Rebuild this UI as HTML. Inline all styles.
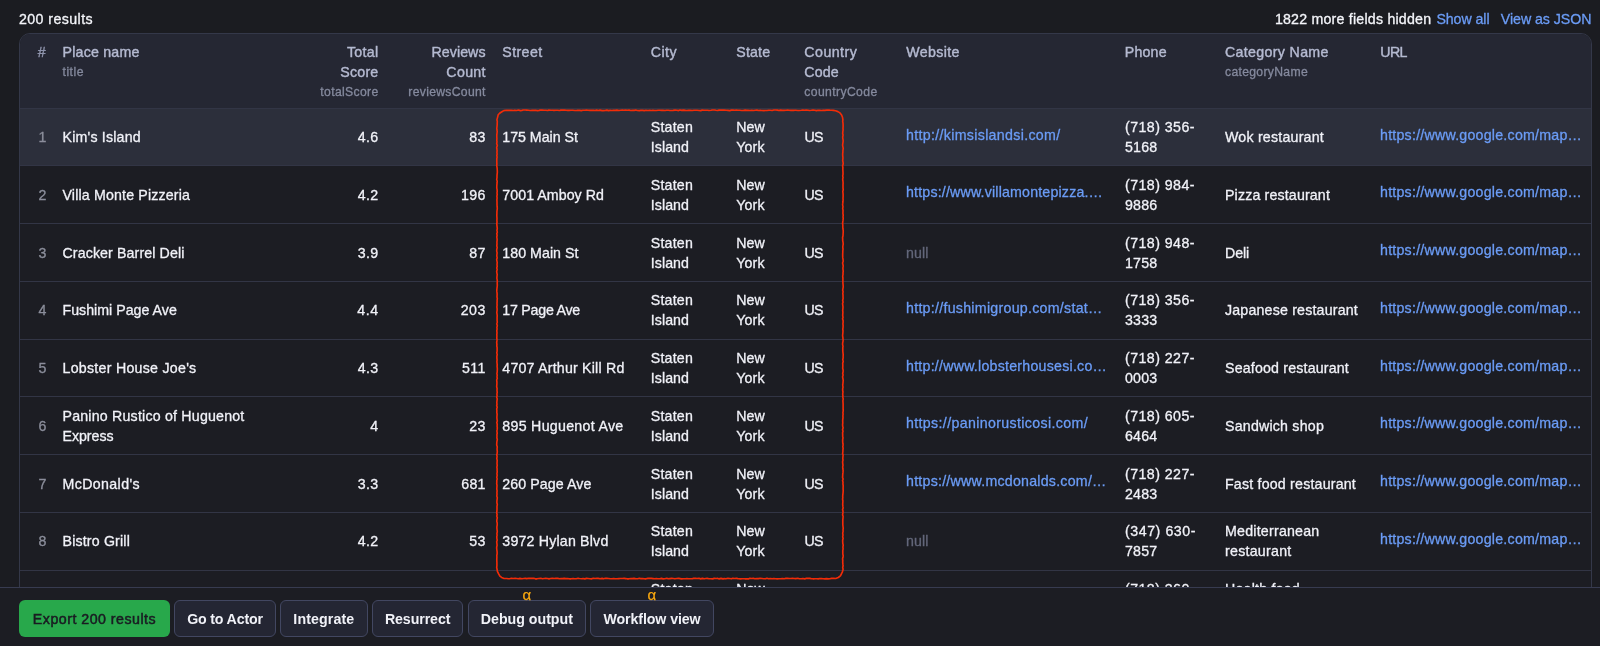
<!DOCTYPE html>
<html lang="en">
<head>
<meta charset="utf-8">
<title>Dataset results</title>
<style>
html,body{margin:0;padding:0}
body{width:1600px;height:646px;overflow:hidden;background:#1b1c21;position:relative;
 font-family:"Liberation Sans",sans-serif;font-size:14.2px;line-height:20px;color:#f1f2f8}
.t{position:absolute;white-space:nowrap;line-height:20px;-webkit-text-stroke:0.3px currentColor}
#txt{position:absolute;left:0;top:0;width:1600px;height:646px;will-change:transform}
.h,.hi{-webkit-text-stroke:0.42px currentColor}
.w{color:#f4f5fa}
.h{color:#b5bad1}
.hi{color:#8e93ab}
.s{color:#858a9e}
.i{color:#8b8e9b}
.c{color:#f1f2f8}
.a{color:#6b9cf6}
.n{color:#63677a}
#grid{position:absolute;left:19px;top:33px;width:1573px;height:620px;box-sizing:border-box;
 border:1px solid #343849;border-radius:11px 11px 0 0;background:#1c1d23;overflow:hidden}
#grid .hd{position:absolute;left:0;top:0;width:100%;height:74px;background:#252733}
#grid .sel{position:absolute;left:0;width:100%;background:#2c2f3b}
#grid .ln{position:absolute;left:0;width:100%;height:1px;background:#323545}
#bar{position:absolute;left:0;top:587px;width:1600px;height:59px;background:#1c1d23;border-top:1px solid #373b50;box-sizing:border-box}
#tools{position:absolute;left:0;top:0;width:1600px;height:646px;will-change:transform}
.btn{position:absolute;box-sizing:border-box;border-radius:6px;font:inherit;font-weight:bold;white-space:nowrap;margin:0;padding:0;border:0;text-align:left;overflow:visible;cursor:pointer}
.btn .t{-webkit-text-stroke:0}
.btn.g{background:#28a84b;color:#1a1c22;font-weight:normal}
.btn.g .t{-webkit-text-stroke:0.5px currentColor}
.btn.b{background:#242633;border:1px solid #424761;color:#f1f2f8}
.alpha{position:absolute;color:#f9a80f;font-size:15px;line-height:16px;width:20px;text-align:center;-webkit-text-stroke:0.25px #f9a80f}
#mark{position:absolute;left:0;top:0}
</style>
</head>
<body>
<div id="grid">
<div class="hd"></div>
<div class="sel" style="top:74.75px;height:56.73px"></div>
<div class="ln" style="top:73.75px"></div>
<div class="ln" style="top:131.48px"></div>
<div class="ln" style="top:189.21px"></div>
<div class="ln" style="top:246.94px"></div>
<div class="ln" style="top:304.67px"></div>
<div class="ln" style="top:362.40px"></div>
<div class="ln" style="top:420.13px"></div>
<div class="ln" style="top:477.86px"></div>
<div class="ln" style="top:535.59px"></div>
<div class="ln" style="top:593.32px"></div>
</div>
<div id="txt">
<div class="topbar" role="status">
<span class="t w" style="top:8.68px;left:19.00px;letter-spacing:0.418px">200 results</span>
<span class="t w" style="top:8.68px;left:1274.90px;letter-spacing:0.216px">1822 more fields hidden</span>
<a class="t a" style="top:8.68px;left:1436.40px;letter-spacing:-0.068px">Show all</a>
<a class="t a" style="top:8.68px;left:1500.80px;letter-spacing:-0.042px">View as JSON</a>
</div>
<div class="thead" role="row">
<span class="t hi" style="top:42.18px;left:37.80px;letter-spacing:0.900px">#</span>
<span class="t h" style="top:42.18px;left:62.50px;letter-spacing:0.208px">Place name</span>
<span class="t s" style="top:62.57px;left:62.50px;font-size:12.2px;line-height:18px;letter-spacing:0.506px">title</span>
<span class="t h" style="top:42.18px;right:1221.39px;letter-spacing:0.356px">Total</span>
<span class="t h" style="top:62.28px;right:1221.51px;letter-spacing:0.237px">Score</span>
<span class="t s" style="top:83.17px;right:1221.41px;font-size:12.2px;line-height:18px;letter-spacing:0.338px">totalScore</span>
<span class="t h" style="top:42.18px;right:1114.45px;letter-spacing:0.054px">Reviews</span>
<span class="t h" style="top:62.28px;right:1114.17px;letter-spacing:0.328px">Count</span>
<span class="t s" style="top:83.17px;right:1114.20px;font-size:12.2px;line-height:18px;letter-spacing:0.305px">reviewsCount</span>
<span class="t h" style="top:42.18px;left:502.30px;letter-spacing:0.390px">Street</span>
<span class="t h" style="top:42.18px;left:650.75px;letter-spacing:0.453px">City</span>
<span class="t h" style="top:42.18px;left:736.30px;letter-spacing:0.172px">State</span>
<span class="t h" style="top:42.18px;left:804.30px;letter-spacing:0.473px">Country</span>
<span class="t h" style="top:62.28px;left:804.30px;letter-spacing:0.145px">Code</span>
<span class="t s" style="top:83.17px;left:804.30px;font-size:12.2px;line-height:18px;letter-spacing:0.376px">countryCode</span>
<span class="t h" style="top:42.18px;left:906.30px;letter-spacing:0.357px">Website</span>
<span class="t h" style="top:42.18px;left:1124.80px;letter-spacing:0.194px">Phone</span>
<span class="t h" style="top:42.18px;left:1225.00px;letter-spacing:0.338px">Category Name</span>
<span class="t s" style="top:62.57px;left:1225.00px;font-size:12.2px;line-height:18px;letter-spacing:0.311px">categoryName</span>
<span class="t h" style="top:42.18px;left:1380.30px;letter-spacing:-0.600px">URL</span>
</div>
<div class="tr" role="row">
<span class="t i" style="top:127.24px;right:1553.70px">1</span>
<span class="t c" style="top:127.24px;left:62.50px;letter-spacing:0.188px">Kim&#x27;s Island</span>
<span class="t c" style="top:127.24px;right:1221.38px;letter-spacing:0.422px">4.6</span>
<span class="t c" style="top:127.24px;right:1113.89px;letter-spacing:0.609px">83</span>
<span class="t c" style="top:127.24px;left:502.30px;letter-spacing:-0.011px">175 Main St</span>
<span class="t c" style="top:117.24px;left:650.75px;letter-spacing:0.203px">Staten</span>
<span class="t c" style="top:137.24px;left:650.75px;letter-spacing:0.065px">Island</span>
<span class="t c" style="top:117.24px;left:736.20px;letter-spacing:0.036px">New</span>
<span class="t c" style="top:137.24px;left:736.20px;letter-spacing:0.156px">York</span>
<span class="t c" style="top:127.24px;left:804.40px;letter-spacing:-0.559px">US</span>
<a class="t a" style="top:124.64px;left:906.00px;letter-spacing:0.327px">http://kimsislandsi.com/</a>
<span class="t c" style="top:117.24px;left:1125.00px;letter-spacing:0.453px">(718) 356-</span>
<span class="t c" style="top:137.24px;left:1125.00px;letter-spacing:0.234px">5168</span>
<span class="t c" style="top:127.24px;left:1225.00px;letter-spacing:0.218px">Wok restaurant</span>
<a class="t a" style="top:124.64px;left:1380.00px;letter-spacing:0.238px">https://www.google.com/map…</a>
</div>
<div class="tr" role="row">
<span class="t i" style="top:184.97px;right:1553.70px">2</span>
<span class="t c" style="top:184.97px;left:62.50px;letter-spacing:0.159px">Villa Monte Pizzeria</span>
<span class="t c" style="top:184.97px;right:1221.38px;letter-spacing:0.422px">4.2</span>
<span class="t c" style="top:184.97px;right:1114.06px;letter-spacing:0.443px">196</span>
<span class="t c" style="top:184.97px;left:502.30px;letter-spacing:0.056px">7001 Amboy Rd</span>
<span class="t c" style="top:174.97px;left:650.75px;letter-spacing:0.203px">Staten</span>
<span class="t c" style="top:194.97px;left:650.75px;letter-spacing:0.065px">Island</span>
<span class="t c" style="top:174.97px;left:736.20px;letter-spacing:0.036px">New</span>
<span class="t c" style="top:194.97px;left:736.20px;letter-spacing:0.156px">York</span>
<span class="t c" style="top:184.97px;left:804.40px;letter-spacing:-0.559px">US</span>
<a class="t a" style="top:182.37px;left:906.00px;letter-spacing:0.186px">https://www.villamontepizza.…</a>
<span class="t c" style="top:174.97px;left:1125.00px;letter-spacing:0.453px">(718) 984-</span>
<span class="t c" style="top:194.97px;left:1125.00px;letter-spacing:0.234px">9886</span>
<span class="t c" style="top:184.97px;left:1225.00px;letter-spacing:0.155px">Pizza restaurant</span>
<a class="t a" style="top:182.37px;left:1380.00px;letter-spacing:0.238px">https://www.google.com/map…</a>
</div>
<div class="tr" role="row">
<span class="t i" style="top:242.70px;right:1553.70px">3</span>
<span class="t c" style="top:242.70px;left:62.50px;letter-spacing:0.113px">Cracker Barrel Deli</span>
<span class="t c" style="top:242.70px;right:1221.38px;letter-spacing:0.422px">3.9</span>
<span class="t c" style="top:242.70px;right:1113.89px;letter-spacing:0.609px">87</span>
<span class="t c" style="top:242.70px;left:502.30px;letter-spacing:0.044px">180 Main St</span>
<span class="t c" style="top:232.70px;left:650.75px;letter-spacing:0.203px">Staten</span>
<span class="t c" style="top:252.70px;left:650.75px;letter-spacing:0.065px">Island</span>
<span class="t c" style="top:232.70px;left:736.20px;letter-spacing:0.036px">New</span>
<span class="t c" style="top:252.70px;left:736.20px;letter-spacing:0.156px">York</span>
<span class="t c" style="top:242.70px;left:804.40px;letter-spacing:-0.559px">US</span>
<span class="t n" style="top:242.70px;left:906.00px;letter-spacing:0.102px">null</span>
<span class="t c" style="top:232.70px;left:1125.00px;letter-spacing:0.453px">(718) 948-</span>
<span class="t c" style="top:252.70px;left:1125.00px;letter-spacing:0.234px">1758</span>
<span class="t c" style="top:242.70px;left:1225.00px;letter-spacing:-0.113px">Deli</span>
<a class="t a" style="top:240.10px;left:1380.00px;letter-spacing:0.238px">https://www.google.com/map…</a>
</div>
<div class="tr" role="row">
<span class="t i" style="top:300.43px;right:1553.70px">4</span>
<span class="t c" style="top:300.43px;left:62.50px;letter-spacing:0.013px">Fushimi Page Ave</span>
<span class="t c" style="top:300.43px;right:1221.21px;letter-spacing:0.589px">4.4</span>
<span class="t c" style="top:300.43px;right:1113.89px;letter-spacing:0.609px">203</span>
<span class="t c" style="top:300.43px;left:502.30px;letter-spacing:-0.229px">17 Page Ave</span>
<span class="t c" style="top:290.43px;left:650.75px;letter-spacing:0.203px">Staten</span>
<span class="t c" style="top:310.43px;left:650.75px;letter-spacing:0.065px">Island</span>
<span class="t c" style="top:290.43px;left:736.20px;letter-spacing:0.036px">New</span>
<span class="t c" style="top:310.43px;left:736.20px;letter-spacing:0.156px">York</span>
<span class="t c" style="top:300.43px;left:804.40px;letter-spacing:-0.559px">US</span>
<a class="t a" style="top:297.83px;left:906.00px;letter-spacing:0.277px">http://fushimigroup.com/stat…</a>
<span class="t c" style="top:290.43px;left:1125.00px;letter-spacing:0.453px">(718) 356-</span>
<span class="t c" style="top:310.43px;left:1125.00px;letter-spacing:0.234px">3333</span>
<span class="t c" style="top:300.43px;left:1225.00px;letter-spacing:0.192px">Japanese restaurant</span>
<a class="t a" style="top:297.83px;left:1380.00px;letter-spacing:0.238px">https://www.google.com/map…</a>
</div>
<div class="tr" role="row">
<span class="t i" style="top:358.16px;right:1553.70px">5</span>
<span class="t c" style="top:358.16px;left:62.50px;letter-spacing:0.268px">Lobster House Joe&#x27;s</span>
<span class="t c" style="top:358.16px;right:1221.38px;letter-spacing:0.422px">4.3</span>
<span class="t c" style="top:358.16px;right:1114.04px;letter-spacing:0.458px">511</span>
<span class="t c" style="top:358.16px;left:502.30px;letter-spacing:0.205px">4707 Arthur Kill Rd</span>
<span class="t c" style="top:348.16px;left:650.75px;letter-spacing:0.203px">Staten</span>
<span class="t c" style="top:368.16px;left:650.75px;letter-spacing:0.065px">Island</span>
<span class="t c" style="top:348.16px;left:736.20px;letter-spacing:0.036px">New</span>
<span class="t c" style="top:368.16px;left:736.20px;letter-spacing:0.156px">York</span>
<span class="t c" style="top:358.16px;left:804.40px;letter-spacing:-0.559px">US</span>
<a class="t a" style="top:355.56px;left:906.00px;letter-spacing:0.242px">http://www.lobsterhousesi.co…</a>
<span class="t c" style="top:348.16px;left:1125.00px;letter-spacing:0.453px">(718) 227-</span>
<span class="t c" style="top:368.16px;left:1125.00px;letter-spacing:0.234px">0003</span>
<span class="t c" style="top:358.16px;left:1225.00px;letter-spacing:0.184px">Seafood restaurant</span>
<a class="t a" style="top:355.56px;left:1380.00px;letter-spacing:0.238px">https://www.google.com/map…</a>
</div>
<div class="tr" role="row">
<span class="t i" style="top:415.89px;right:1553.70px">6</span>
<span class="t c" style="top:405.89px;left:62.50px;letter-spacing:0.205px">Panino Rustico of Huguenot</span>
<span class="t c" style="top:425.89px;left:62.50px;letter-spacing:-0.036px">Express</span>
<span class="t c" style="top:415.89px;right:1221.19px;letter-spacing:0.609px">4</span>
<span class="t c" style="top:415.89px;right:1113.89px;letter-spacing:0.609px">23</span>
<span class="t c" style="top:415.89px;left:502.30px;letter-spacing:0.294px">895 Huguenot Ave</span>
<span class="t c" style="top:405.89px;left:650.75px;letter-spacing:0.203px">Staten</span>
<span class="t c" style="top:425.89px;left:650.75px;letter-spacing:0.065px">Island</span>
<span class="t c" style="top:405.89px;left:736.20px;letter-spacing:0.036px">New</span>
<span class="t c" style="top:425.89px;left:736.20px;letter-spacing:0.156px">York</span>
<span class="t c" style="top:415.89px;left:804.40px;letter-spacing:-0.559px">US</span>
<a class="t a" style="top:413.29px;left:906.00px;letter-spacing:0.360px">https://paninorusticosi.com/</a>
<span class="t c" style="top:405.89px;left:1125.00px;letter-spacing:0.453px">(718) 605-</span>
<span class="t c" style="top:425.89px;left:1125.00px;letter-spacing:0.234px">6464</span>
<span class="t c" style="top:415.89px;left:1225.00px;letter-spacing:0.213px">Sandwich shop</span>
<a class="t a" style="top:413.29px;left:1380.00px;letter-spacing:0.238px">https://www.google.com/map…</a>
</div>
<div class="tr" role="row">
<span class="t i" style="top:473.62px;right:1553.70px">7</span>
<span class="t c" style="top:473.62px;left:62.50px;letter-spacing:0.381px">McDonald&#x27;s</span>
<span class="t c" style="top:473.62px;right:1221.38px;letter-spacing:0.422px">3.3</span>
<span class="t c" style="top:473.62px;right:1114.22px;letter-spacing:0.276px">681</span>
<span class="t c" style="top:473.62px;left:502.30px;letter-spacing:0.091px">260 Page Ave</span>
<span class="t c" style="top:463.62px;left:650.75px;letter-spacing:0.203px">Staten</span>
<span class="t c" style="top:483.62px;left:650.75px;letter-spacing:0.065px">Island</span>
<span class="t c" style="top:463.62px;left:736.20px;letter-spacing:0.036px">New</span>
<span class="t c" style="top:483.62px;left:736.20px;letter-spacing:0.156px">York</span>
<span class="t c" style="top:473.62px;left:804.40px;letter-spacing:-0.559px">US</span>
<a class="t a" style="top:471.02px;left:906.00px;letter-spacing:0.242px">https://www.mcdonalds.com/…</a>
<span class="t c" style="top:463.62px;left:1125.00px;letter-spacing:0.453px">(718) 227-</span>
<span class="t c" style="top:483.62px;left:1125.00px;letter-spacing:0.234px">2483</span>
<span class="t c" style="top:473.62px;left:1225.00px;letter-spacing:0.202px">Fast food restaurant</span>
<a class="t a" style="top:471.02px;left:1380.00px;letter-spacing:0.238px">https://www.google.com/map…</a>
</div>
<div class="tr" role="row">
<span class="t i" style="top:531.35px;right:1553.70px">8</span>
<span class="t c" style="top:531.35px;left:62.50px;letter-spacing:0.172px">Bistro Grill</span>
<span class="t c" style="top:531.35px;right:1221.38px;letter-spacing:0.422px">4.2</span>
<span class="t c" style="top:531.35px;right:1113.89px;letter-spacing:0.609px">53</span>
<span class="t c" style="top:531.35px;left:502.30px;letter-spacing:0.191px">3972 Hylan Blvd</span>
<span class="t c" style="top:521.35px;left:650.75px;letter-spacing:0.203px">Staten</span>
<span class="t c" style="top:541.35px;left:650.75px;letter-spacing:0.065px">Island</span>
<span class="t c" style="top:521.35px;left:736.20px;letter-spacing:0.036px">New</span>
<span class="t c" style="top:541.35px;left:736.20px;letter-spacing:0.156px">York</span>
<span class="t c" style="top:531.35px;left:804.40px;letter-spacing:-0.559px">US</span>
<span class="t n" style="top:531.35px;left:906.00px;letter-spacing:0.102px">null</span>
<span class="t c" style="top:521.35px;left:1125.00px;letter-spacing:0.553px">(347) 630-</span>
<span class="t c" style="top:541.35px;left:1125.00px;letter-spacing:0.234px">7857</span>
<span class="t c" style="top:521.35px;left:1225.00px;letter-spacing:0.231px">Mediterranean</span>
<span class="t c" style="top:541.35px;left:1225.00px;letter-spacing:0.261px">restaurant</span>
<a class="t a" style="top:528.75px;left:1380.00px;letter-spacing:0.238px">https://www.google.com/map…</a>
</div>
<div class="tr" role="row">
<span class="t c" style="top:579.08px;left:650.75px;letter-spacing:0.203px">Staten</span>
<span class="t c" style="top:599.08px;left:650.75px;letter-spacing:0.065px">Island</span>
<span class="t c" style="top:579.08px;left:736.20px;letter-spacing:0.036px">New</span>
<span class="t c" style="top:599.08px;left:736.20px;letter-spacing:0.156px">York</span>
<span class="t c" style="top:579.08px;left:1125.00px;letter-spacing:0.453px">(718) 360-</span>
<span class="t c" style="top:599.08px;left:1125.00px;letter-spacing:0.234px">0000</span>
<span class="t c" style="top:579.08px;left:1225.00px;letter-spacing:0.220px">Health food</span>
<span class="t c" style="top:599.08px;left:1225.00px;letter-spacing:0.091px">store</span>
</div>
</div>
<div id="bar"></div>
<div id="tools">
<button type="button" class="btn g" style="left:19.25px;top:600.00px;width:150.50px;height:36.50px"><span class="t" style="left:13.62px;top:8.98px;letter-spacing:0.494px">Export 200 results</span></button>
<button type="button" class="btn b" style="left:174.25px;top:600.00px;width:101.50px;height:36.50px"><span class="t" style="left:11.88px;top:7.98px;letter-spacing:-0.159px">Go to Actor</span></button>
<button type="button" class="btn b" style="left:280.25px;top:600.00px;width:87.25px;height:36.50px"><span class="t" style="left:12.12px;top:7.98px;letter-spacing:0.120px">Integrate</span></button>
<button type="button" class="btn b" style="left:372.00px;top:600.00px;width:91.25px;height:36.50px"><span class="t" style="left:11.88px;top:7.98px;letter-spacing:-0.083px">Resurrect</span></button>
<button type="button" class="btn b" style="left:467.75px;top:600.00px;width:118.25px;height:36.50px"><span class="t" style="left:12.12px;top:7.98px;letter-spacing:-0.017px">Debug output</span></button>
<button type="button" class="btn b" style="left:590.25px;top:600.00px;width:123.50px;height:36.50px"><span class="t" style="left:12.25px;top:7.98px;letter-spacing:-0.099px">Workflow view</span></button>
<span class="alpha" style="left:516.90px;top:587.20px">α</span>
<span class="alpha" style="left:641.90px;top:587.20px">α</span>
</div>
<svg id="mark" width="1600" height="646" viewBox="0 0 1600 646"><path d="M506.5 110.3L508.5 110.3L509.9 110.4L511.4 110.3L513.4 110.5L514.8 110.2L516.5 110.5L518.5 110.0L520.4 110.6L521.9 110.4L523.3 110.0L525.2 110.0L526.7 110.1L528.4 110.3L530.3 110.5L532.1 110.4L533.7 110.4L535.4 110.2L537.4 110.6L539.1 110.4L540.4 110.1L542.1 110.0L544.1 110.2L545.9 110.2L547.6 110.5L548.8 110.1L551.0 110.3L552.8 110.2L553.9 110.4L556.0 110.2L557.3 110.2L559.6 110.5L560.8 110.1L562.4 110.0L564.6 110.1L566.1 110.3L567.6 110.4L569.3 110.4L571.0 110.3L572.7 110.2L574.9 110.5L576.2 110.5L577.8 110.2L579.9 110.4L581.2 110.6L582.9 110.2L585.0 110.2L586.4 110.0L588.0 110.3L589.8 110.4L591.6 110.3L593.6 110.3L595.1 110.5L596.5 110.1L598.7 110.5L600.0 110.1L602.0 110.6L603.4 110.6L605.5 110.4L606.9 110.1L608.4 110.6L610.2 110.4L611.9 110.5L613.8 110.2L615.3 110.4L616.9 110.1L618.9 110.5L620.6 110.2L622.5 110.1L623.7 110.2L625.6 110.0L627.2 110.2L629.1 110.1L630.7 110.5L632.8 110.4L634.3 110.4L635.7 110.0L637.3 110.5L639.4 110.6L640.7 110.4L642.7 110.4L644.3 110.6L645.9 110.3L648.0 110.5L649.7 110.4L651.4 110.5L652.8 110.4L654.9 110.5L656.3 110.5L658.2 110.3L659.8 110.2L661.5 110.4L662.9 110.4L665.1 110.5L666.7 110.2L668.4 110.3L669.9 110.5L671.4 110.5L673.1 110.4L675.0 110.1L676.9 110.3L678.5 110.6L680.0 110.0L681.7 110.4L683.4 110.1L685.5 110.4L686.9 110.5L688.6 110.4L690.2 110.3L692.3 110.5L694.0 110.2L695.5 110.2L697.0 110.3L699.1 110.5L700.7 110.6L702.2 110.1L704.0 110.2L705.5 110.2L707.5 110.3L709.0 110.5L711.1 110.3L712.3 110.0L714.4 110.0L716.0 110.3L717.5 110.5L719.0 110.1L721.0 110.0L722.9 110.1L724.2 110.0L726.2 110.3L727.9 110.4L729.7 110.6L731.4 110.1L732.9 110.1L734.4 110.3L736.5 110.1L737.9 110.2L739.9 110.3L741.5 110.5L743.1 110.5L745.1 110.1L746.8 110.4L748.0 110.3L750.0 110.5L751.6 110.3L753.6 110.5L755.3 110.3L756.9 110.1L758.6 110.5L760.3 110.4L761.7 110.5L763.9 110.6L765.3 110.5L766.9 110.5L768.9 110.2L770.2 110.3L772.1 110.5L773.8 110.0L775.7 110.0L777.4 110.1L778.8 110.5L780.4 110.1L782.3 110.4L784.2 110.4L786.0 110.3L787.7 110.1L789.0 110.3L790.7 110.4L792.6 110.3L794.4 110.3L795.8 110.2L797.9 110.5L799.2 110.5L801.3 110.3L802.8 110.1L804.5 110.3L806.2 110.0L808.1 110.3L809.5 110.5L811.3 110.3L813.1 110.0L814.7 110.2L816.6 110.6L817.9 110.3L819.6 110.3L821.7 110.5L823.2 110.2L824.7 110.4L826.8 110.1L828.5 110.0L829.8 110.1L831.8 110.2L833.3 110.4L835.6 110.8L837.9 111.6L840.0 112.9L841.6 115.0L842.5 117.3L842.9 119.6L842.7 121.6L843.0 123.2L843.1 125.0L843.1 126.4L843.0 128.5L843.1 129.9L842.8 132.0L842.7 133.7L843.1 134.9L842.7 137.0L842.8 138.3L843.1 140.2L843.1 141.7L842.8 143.7L842.6 145.1L843.0 147.3L843.2 148.5L842.9 150.6L842.9 152.2L842.7 153.6L842.7 155.3L842.9 157.3L842.9 158.7L842.7 160.5L843.1 162.6L843.2 163.8L842.6 166.0L842.9 167.6L842.8 169.1L842.9 170.8L843.0 172.3L843.0 174.5L842.7 175.9L843.0 177.6L842.7 179.2L842.9 180.8L843.1 183.0L843.0 184.7L843.0 186.1L843.0 187.9L843.2 189.8L842.8 191.5L843.0 193.1L843.1 194.6L843.1 196.6L843.0 198.2L843.1 199.7L843.0 201.2L842.8 203.2L842.6 204.8L843.0 206.7L842.7 208.6L843.0 209.9L843.0 211.7L842.9 213.3L843.2 215.2L843.0 217.0L843.2 218.2L843.0 220.4L842.8 221.9L842.6 223.4L842.8 225.1L842.8 227.3L842.9 228.7L843.2 230.5L843.2 232.2L843.1 233.6L843.0 235.7L842.6 237.5L842.7 238.9L842.7 240.6L843.0 242.1L843.2 244.0L842.9 245.8L842.8 247.3L843.0 249.2L842.8 251.0L842.8 252.3L842.7 254.0L842.7 256.1L842.8 257.9L843.0 259.1L843.2 261.3L842.6 263.0L842.9 264.4L843.2 266.0L842.9 268.1L843.0 269.5L843.2 271.5L843.0 272.7L843.0 274.6L842.7 276.1L842.9 277.9L842.9 279.9L842.9 281.3L842.9 283.1L843.1 284.9L843.2 286.9L843.0 288.1L842.7 290.2L843.1 291.8L842.8 293.3L843.0 295.1L843.0 296.9L843.1 298.3L842.7 300.5L843.1 302.1L842.6 303.3L842.8 305.3L843.0 306.8L842.9 308.5L842.7 310.5L842.9 312.2L842.8 313.8L842.7 315.4L843.0 317.4L842.6 318.7L843.1 320.7L843.1 322.2L842.9 323.9L843.1 325.7L843.0 327.7L842.8 329.2L843.0 331.1L842.9 332.5L842.7 334.5L842.6 335.7L842.9 337.6L843.0 339.2L843.1 340.8L842.7 342.8L842.6 344.3L843.0 346.3L842.8 347.6L842.8 349.7L842.8 351.0L843.0 353.0L843.2 354.9L843.1 356.3L843.1 357.9L842.8 359.7L843.2 361.7L842.7 363.1L842.8 364.8L842.8 366.5L842.7 368.3L843.1 370.0L843.1 371.7L842.7 373.5L843.1 375.0L842.6 376.8L842.9 378.5L843.2 380.3L843.1 381.6L842.9 383.8L842.7 385.0L843.0 387.2L842.7 388.8L842.7 390.5L843.0 392.0L842.7 394.0L842.9 395.7L842.8 397.1L843.2 399.0L842.9 400.6L843.0 402.4L843.1 404.0L843.1 405.8L843.1 407.6L843.1 409.4L843.2 410.9L842.9 412.7L843.1 414.2L842.9 415.7L843.0 417.9L842.8 419.1L842.7 421.0L842.8 423.0L842.6 424.3L842.7 426.2L843.1 427.7L842.6 429.5L843.0 431.5L842.6 432.7L842.7 434.5L842.7 436.5L843.0 437.9L842.7 439.6L842.7 441.6L842.8 443.2L843.1 444.8L842.8 446.8L843.1 448.2L842.9 450.2L842.9 451.5L842.6 453.6L843.1 455.0L842.9 456.8L842.8 458.8L843.0 460.0L842.6 461.9L842.8 463.8L843.0 465.3L842.7 466.8L842.8 468.5L843.1 470.4L843.0 472.4L842.8 473.8L842.7 475.7L842.6 477.4L843.1 479.1L842.6 480.5L843.0 482.1L842.9 484.0L843.2 485.8L843.1 487.3L843.1 489.1L843.2 490.6L843.1 492.3L842.9 494.2L842.7 496.1L842.8 497.5L842.6 499.2L842.9 501.2L842.8 502.8L842.7 504.4L842.9 506.4L843.1 507.9L842.6 509.5L843.0 511.1L842.9 512.9L842.6 514.9L843.1 516.2L843.0 517.9L842.8 519.8L842.8 521.3L842.8 523.2L842.8 524.7L843.0 526.5L843.2 528.3L843.0 529.9L843.1 531.4L842.7 533.1L843.0 535.2L842.7 536.7L843.1 538.5L842.7 540.0L842.7 541.6L842.8 543.3L843.2 545.2L842.9 547.1L843.1 548.9L842.8 550.3L842.8 551.8L842.8 553.9L843.2 555.7L843.0 557.3L842.6 558.8L842.8 560.7L842.7 562.2L842.9 564.2L843.1 565.8L842.7 567.6L843.1 569.1L842.5 571.6L841.4 574.0L840.4 575.8L838.3 577.5L835.7 578.5L833.5 578.4L831.4 578.4L830.0 578.7L828.2 578.9L826.5 578.6L824.7 578.9L823.0 578.8L821.5 578.6L819.8 578.5L818.3 578.9L816.6 578.7L814.4 578.8L812.8 578.8L811.1 578.6L809.8 578.4L807.9 578.3L805.9 578.4L804.7 578.9L802.8 578.5L801.2 578.7L799.3 578.7L797.8 578.3L795.8 578.6L794.0 578.5L792.6 578.4L790.8 578.5L789.2 578.5L787.5 578.3L785.8 578.4L784.3 578.7L782.3 578.5L780.7 578.7L779.1 578.8L777.2 578.9L775.7 578.8L773.8 578.6L772.1 578.8L770.4 578.6L768.7 578.8L766.9 578.3L765.4 578.8L763.7 578.7L762.0 578.5L760.2 578.3L758.3 578.6L756.8 578.5L754.8 578.7L753.4 578.4L751.6 578.5L749.8 578.3L748.5 578.9L746.7 578.8L744.8 578.8L743.0 578.7L741.5 578.8L739.5 578.8L737.8 578.6L736.6 578.3L734.5 578.5L732.8 578.3L731.5 578.8L729.5 578.5L727.9 578.3L725.9 578.8L724.3 578.6L723.0 578.9L721.0 578.4L719.2 578.9L717.9 578.4L716.1 578.5L714.2 578.4L712.7 578.9L710.6 578.7L708.9 578.8L707.1 578.4L705.8 578.5L704.2 578.8L702.4 578.4L700.7 578.9L698.9 578.3L697.0 578.5L695.6 578.4L693.6 578.4L692.2 578.8L690.3 578.7L688.9 578.7L686.8 578.5L685.5 578.7L683.4 578.7L681.6 578.9L680.1 578.6L678.5 578.3L676.8 578.5L674.9 578.8L673.1 578.5L671.8 578.4L669.8 578.6L668.1 578.8L666.8 578.3L664.8 578.8L663.1 578.9L661.4 578.4L659.8 578.7L657.9 578.7L656.5 578.6L654.6 578.8L653.0 578.6L651.5 578.4L649.7 578.4L647.9 578.4L646.1 578.8L644.6 578.8L642.5 578.6L640.8 578.6L639.3 578.3L637.7 578.7L635.9 578.8L634.0 578.4L632.2 578.6L630.8 578.6L628.9 578.8L627.1 578.8L625.7 578.6L624.2 578.4L622.1 578.5L620.3 578.5L618.9 578.6L617.0 578.7L615.2 578.8L613.6 578.5L611.9 578.7L610.6 578.8L608.4 578.5L606.9 578.4L605.5 578.3L603.5 578.8L602.1 578.4L600.1 578.7L598.2 578.4L597.0 578.4L595.0 578.5L593.3 578.3L591.4 578.9L590.1 578.7L588.1 578.5L586.6 578.4L584.8 578.9L583.0 578.5L581.7 578.7L579.4 578.5L578.1 578.3L576.2 578.7L574.8 578.7L573.1 578.6L571.1 578.8L569.4 578.8L567.6 578.5L565.9 578.6L564.2 578.4L562.5 578.6L560.9 578.6L559.6 578.7L557.8 578.4L555.8 578.3L554.3 578.5L552.3 578.3L550.6 578.5L549.0 578.9L547.5 578.5L545.6 578.4L544.2 578.5L542.4 578.7L540.8 578.3L538.7 578.5L536.9 578.8L535.3 578.8L533.8 578.3L532.0 578.4L530.1 578.4L528.7 578.3L526.8 578.6L525.3 578.4L523.7 578.5L522.0 578.7L519.9 578.4L518.3 578.7L516.7 578.5L515.2 578.4L513.2 578.5L511.4 578.3L509.6 578.7L508.2 578.8L506.8 578.5L504.1 578.5L501.6 577.4L499.9 576.1L498.5 573.7L497.4 571.3L497.0 569.0L496.7 567.3L496.9 565.7L496.9 563.8L496.9 562.3L496.8 560.7L496.8 558.6L496.9 557.1L496.8 555.5L497.1 553.8L497.1 551.8L496.9 550.3L496.7 548.6L496.7 547.0L497.1 545.3L496.9 543.4L496.7 541.8L497.2 540.2L496.9 538.6L496.8 536.7L497.1 535.3L496.9 533.4L497.3 531.8L497.1 530.0L496.9 528.2L496.9 526.8L497.2 524.8L497.2 522.9L496.8 521.5L496.9 519.7L497.3 517.8L496.8 516.2L497.1 514.5L496.7 513.0L496.9 511.1L497.0 509.6L497.0 507.9L497.0 506.3L497.3 504.3L496.9 503.0L496.9 501.2L497.1 499.4L497.3 497.8L496.8 496.0L497.0 494.3L496.9 492.4L497.1 490.8L496.8 489.0L496.9 487.2L497.0 485.5L496.7 483.7L496.8 482.4L496.8 480.6L497.2 478.9L496.8 477.4L497.2 475.2L496.9 473.8L497.2 472.0L497.1 470.2L497.1 468.6L496.9 467.1L497.2 465.5L497.0 463.5L497.1 462.0L497.2 460.4L496.8 458.4L497.1 456.6L496.8 454.8L497.1 453.6L497.3 451.4L497.1 449.9L497.1 448.2L497.3 446.9L496.7 445.0L496.8 442.9L496.9 441.6L497.3 439.5L496.9 437.8L497.0 436.3L496.9 434.5L497.2 433.2L496.9 431.2L497.1 429.7L497.3 427.8L497.1 426.2L497.2 424.2L496.8 422.5L497.3 420.9L497.0 419.1L496.9 417.3L497.0 415.7L497.1 414.1L496.8 412.5L496.9 410.7L496.7 408.9L497.2 407.3L496.7 405.5L497.0 404.3L496.8 402.5L497.0 400.6L497.2 398.8L496.7 397.2L497.1 395.6L496.9 394.1L497.2 392.4L497.0 390.6L497.1 388.5L496.7 386.8L496.8 385.0L496.9 383.7L496.9 381.9L496.7 380.0L497.3 378.2L497.0 377.0L497.2 375.2L496.9 373.6L497.2 371.8L497.3 369.7L497.3 368.2L497.1 366.4L497.2 364.6L497.0 363.0L496.9 361.4L497.1 360.0L496.9 358.1L496.9 356.2L497.2 354.6L496.8 352.9L497.1 351.1L497.1 349.6L497.1 347.7L496.8 345.9L496.9 344.4L496.7 342.7L496.9 340.9L497.0 339.6L496.8 337.9L496.9 336.1L496.8 334.5L497.0 332.8L496.8 330.8L497.1 328.9L496.9 327.5L497.3 325.6L496.8 323.9L497.3 322.1L497.1 320.6L497.1 318.7L497.1 317.5L497.2 315.6L497.0 313.9L496.8 312.3L497.1 310.4L497.1 308.7L496.9 306.8L497.1 305.4L497.0 303.3L497.1 301.9L497.1 300.3L497.3 298.3L497.0 297.1L497.1 295.0L497.1 293.7L496.9 291.9L496.8 290.3L497.0 288.1L497.2 286.7L497.3 285.1L497.2 283.2L497.3 281.2L497.2 279.9L496.9 278.3L497.0 276.4L497.2 274.5L496.9 273.1L496.7 271.3L497.2 269.6L496.8 268.0L497.2 266.3L497.0 264.7L497.2 262.6L496.9 260.8L496.7 259.3L497.2 257.9L496.8 255.8L496.9 254.5L497.1 252.8L496.7 251.1L496.8 249.2L497.2 247.6L496.8 245.8L497.0 243.7L496.9 242.2L497.1 240.5L497.1 239.0L496.8 237.0L497.1 235.5L496.8 233.6L497.3 232.2L496.9 230.2L497.3 228.8L497.1 226.9L496.9 225.3L496.8 223.7L497.0 222.1L496.9 220.2L497.0 218.8L496.9 216.9L496.8 215.2L496.9 213.6L496.9 211.9L497.1 210.0L497.3 208.2L497.1 206.7L497.0 204.6L497.0 203.1L497.0 201.8L496.9 199.9L497.1 197.9L496.9 196.2L497.2 194.5L497.0 192.9L497.2 191.5L497.1 189.6L496.8 188.1L496.8 186.1L496.9 184.6L497.1 182.7L497.2 181.3L496.7 179.4L497.0 177.6L497.0 175.9L497.1 174.3L497.3 172.8L497.3 170.8L497.2 169.2L497.1 167.8L496.7 165.7L496.9 164.1L496.8 162.6L496.8 160.6L496.8 158.9L497.1 157.0L496.8 155.6L497.1 154.0L496.9 152.3L497.1 150.6L496.8 148.7L496.7 147.2L497.3 145.6L496.7 143.5L497.0 141.9L496.8 140.4L496.9 138.5L496.8 136.9L496.8 134.9L497.0 133.3L497.2 131.6L496.9 129.7L496.8 128.3L497.0 126.6L497.2 124.7L497.2 123.0L497.3 121.5L496.9 119.9L497.5 117.6L498.2 114.8L499.6 113.3L501.9 111.7L503.8 110.6Z" fill="none" stroke="#f22c08" stroke-width="1.65" stroke-linejoin="round"/></svg>
</body>
</html>
